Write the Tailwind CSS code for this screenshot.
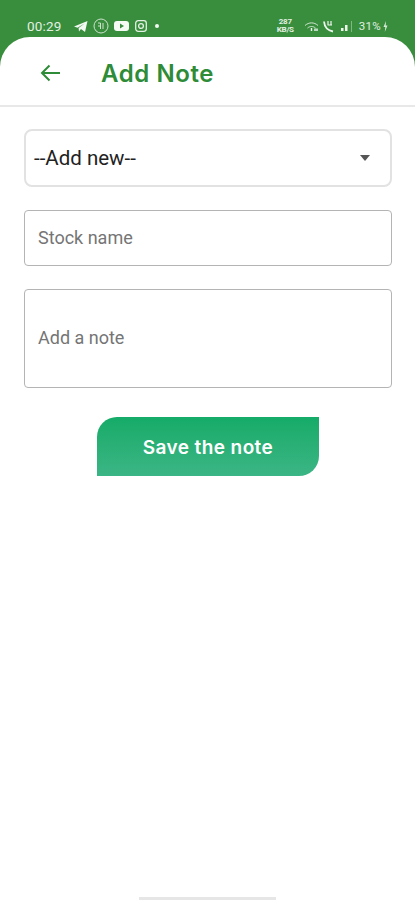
<!DOCTYPE html>
<html lang="en">
<head>
    <meta charset="UTF-8">
    <meta name="viewport" content="width=device-width, initial-scale=1.0">
    <title>Add Note</title>
    <script src="https://cdn.jsdelivr.net/npm/@tailwindcss/browser@4"></script>
</head>
<body class="bg-[#388e3c] font-['Roboto',sans-serif]">
    <div class="w-[415px] h-[900px] overflow-hidden flex flex-col relative">

        <!-- Status bar -->
        <div class="h-[37px] shrink-0 flex items-start justify-between pl-[27px] pr-[27px] pt-[18px] text-[#e3f0e3]">
            <div class="flex items-center h-[16px]">
                <span class="text-[13.500px] leading-[16px] tracking-[0.2px] w-[37px]">00:29</span>
                <svg class="ml-[10px]" width="14" height="13" viewBox="0 0 14 13"><path d="M0 6.500 13.500 1 11 12 7 9 5 11.500 4.600 8 10.500 3.500 3.500 7.800Z" fill="#f2f8f2"/></svg>
                <svg class="ml-[5px]" width="16" height="16" viewBox="0 0 16 16" fill="none" stroke="#cfe3cf"><circle cx="8" cy="8" r="7"/><path d="M5 5h2.500v6M10 5v6M5 8h2" /></svg>
                <svg class="ml-[5px]" width="15" height="10" viewBox="0 0 15 10"><rect width="15" height="10" rx="3" fill="#f5faf5"/><path d="M6 2.500 10 5 6 7.500Z" fill="#388e3c"/></svg>
                <svg class="ml-[6px]" width="12" height="12" viewBox="0 0 12 12" fill="none" stroke="#e3f0e3" stroke-width="1.300"><rect x="0.700" y="0.700" width="10.600" height="10.600" rx="2.500"/><circle cx="6" cy="6" r="2.400"/></svg>
                <span class="ml-[8px] w-[4px] h-[4px] rounded-full bg-[#f2f8f2]"></span>
            </div>
            <div class="flex items-center h-[16px]">
                <span class="text-[8px] leading-[8px] font-bold w-[17px] text-center tracking-[-0.3px]">287<br>KB/S</span>
                <svg class="ml-[10px]" width="15" height="11" viewBox="0 0 15 11" fill="none" stroke="#d5e7d5"><path d="M1 4.500C5 1 10 1 14 4.500M3.500 7C6 5 9 5 11.500 7"/><path d="M7.500 7v3M11 7.500v2.500M13 7.500v2.500" stroke="#f2f8f2" stroke-width="1.400"/></svg>
                <svg class="ml-[3px]" width="13" height="13" viewBox="0 0 13 13" fill="none" stroke="#eef6ee" stroke-width="1.800"><path d="M2 1.500C2.500 7 6 10.500 11 11.500"/><path d="M6 1v4M9 1v4M5.500 5h4.500" stroke-width="1.200"/></svg>
                <svg class="ml-[6px]" width="11" height="12" viewBox="0 0 11 12" fill="#eef6ee"><rect x="0" y="8" width="2.500" height="3"/><rect x="4" y="5" width="2.500" height="6"/><rect x="10" y="1" width="0.800" height="11" opacity="0.500"/></svg>
                <span class="ml-[7px] text-[11.500px] leading-[16px] tracking-[0.3px]">31%</span>
                <svg class="ml-[2px]" width="5" height="11" viewBox="0 0 5 11"><path d="M3 0 0.500 6H2.300L1.800 11 4.500 4.500H2.700Z" fill="#d5e7d5"/></svg>
            </div>
        </div>

        <!-- Page -->
        <div class="flex-1 bg-white rounded-t-[30px] flex flex-col relative">
            <header class="h-[70px] shrink-0 flex items-center border-b-[2px] border-[#e8e8e8] pt-[5px]">
                <svg class="ml-[40px] mt-[-1px]" width="20" height="18" viewBox="0 0 20 18" fill="none" stroke="#2e8b37" stroke-width="2"><path d="M20 9H2M9.500 1.500 2 9l7.500 7.500"/></svg>
                <h1 class="ml-[41px] text-[24px] leading-[28px] font-semibold text-[#2e8b37] font-['Inter',sans-serif] tracking-[0.6px]">Add Note</h1>
            </header>

            <div class="flex flex-col px-[24px] pt-[22px]">
                <div class="h-[58px] w-[368px] border-2 border-[#e2e2e2] rounded-[8px] flex items-center justify-between pl-[8px] pr-[20px]">
                    <span class="text-[20.500px] leading-[26px] text-[#222]">--Add new--</span>
                    <span class="w-0 h-0 border-x-[5.500px] border-x-transparent border-t-[6px] border-t-[#555]"></span>
                </div>

                <div class="mt-[23px] h-[56px] w-[368px] border-[1.500px] border-[#b4b4b4] rounded-[4px] flex items-center pl-[13px]">
                    <span class="text-[18px] leading-[24px] text-[#757575]">Stock name</span>
                </div>

                <div class="mt-[23px] h-[99px] w-[368px] border-[1.500px] border-[#b4b4b4] rounded-[4px] flex items-center pl-[13px]">
                    <span class="text-[18px] leading-[24px] text-[#757575] mt-[-1px]">Add a note</span>
                </div>

                <button class="mt-[29px] ml-[73px] w-[222px] h-[59px] rounded-tl-[20px] rounded-br-[20px] bg-linear-to-b from-[#14ab68] to-[#3ab585] text-white text-[19px] tracking-[0.4px] font-semibold font-['Inter',sans-serif] pt-[3px]">Save the note</button>
            </div>

            <div class="absolute bottom-0 left-[139px] w-[137px] h-[3px] bg-[#e6e6e6]"></div>
        </div>
    </div>
</body>
</html>
